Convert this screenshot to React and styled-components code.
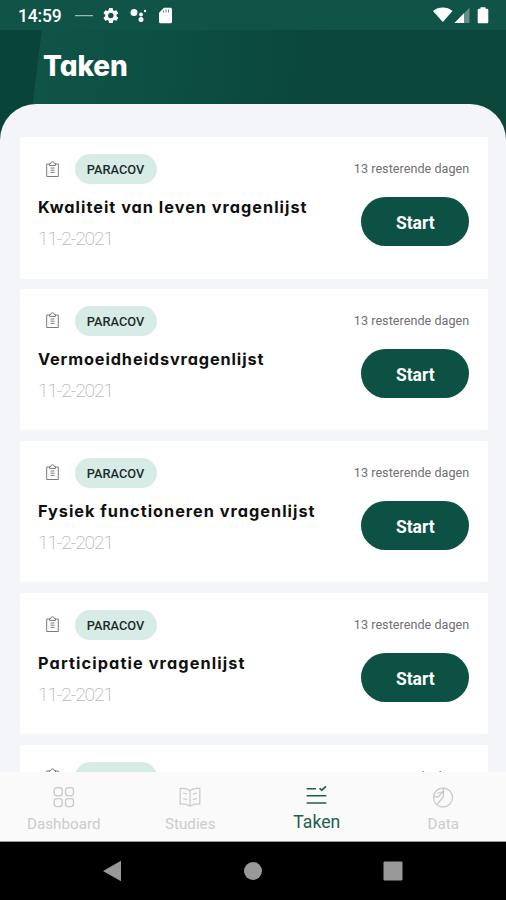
import React from "react";
import styled, { createGlobalStyle } from "styled-components";

const GlobalStyle = createGlobalStyle`
  * {
    box-sizing: border-box;
  }
  body {
    margin: 0;
    font-family: Roboto, "Liberation Sans", sans-serif;
    background-color: #000;
  }
`;

const Screen = styled.div`
  display: flex;
  flex-direction: column;
  width: 506px;
  height: 900px;
  overflow: hidden;
`;

const StatusBar = styled.div`
  display: flex;
  flex-shrink: 0;
  align-items: center;
  justify-content: space-between;
  height: 30px;
  padding: 2px 16px 0 18px;
  background-color: #105347;
`;

const StatusGroup = styled.div`
  display: flex;
  align-items: center;
`;

const Time = styled.span`
  width: 56px;
  color: #fff;
  font-size: 17.5px;
  font-weight: 500;
  letter-spacing: -0.2px;
`;

const Header = styled.header`
  flex-shrink: 0;
  height: 74px;
  padding: 19px 0 0 43px;
  background: linear-gradient(97deg, #084437 41px, #105347 42px, #0b5042 170px, #0b463b 330px);
`;

const PageTitle = styled.h1`
  margin: 0;
  color: #fff;
  font-family: Inter, "Open Sans", sans-serif;
  font-feature-settings: "cv11";
  font-size: 28px;
  font-weight: 800;
  line-height: 35px;
  letter-spacing: -0.1px;
`;

const SheetBack = styled.div`
  flex: 1;
  min-height: 0;
  background: linear-gradient(90deg, #084437 50%, #0b463b 50%);
`;

const Sheet = styled.main`
  display: flex;
  flex-direction: column;
  gap: 10.4px;
  height: 100%;
  padding: 33px 18.5px 0 20px;
  overflow: hidden;
  background-color: #f3f5f9;
  border-radius: 36px 36px 0 0;
`;

const Card = styled.article`
  display: flex;
  flex-shrink: 0;
  justify-content: space-between;
  height: 141.5px;
  padding: 17px 18.2px 0 18px;
  background-color: #fff;
  border-radius: 2px;
`;

const CardInfo = styled.div`
  display: flex;
  flex-direction: column;
`;

const TagRow = styled.div`
  display: flex;
  align-items: center;
  gap: 15.5px;
  padding-left: 8px;
`;

const Tag = styled.span`
  width: 82px;
  height: 30px;
  border-radius: 15px;
  background-color: #d7ece6;
  color: #1c2b29;
  font-size: 12.8px;
  font-weight: 500;
  line-height: 31.5px;
  text-align: center;
`;

const TaskTitle = styled.h2`
  margin: 12px 0 0;
  color: #101010;
  font-family: Inter, "Open Sans", sans-serif;
  font-feature-settings: "cv11";
  font-size: 16.3px;
  font-weight: 700;
  line-height: 23px;
  letter-spacing: ${(props) => props.$spacing}px;
  white-space: nowrap;
`;

const TaskDate = styled.time`
  margin-top: 8px;
  color: #b5b5b5;
  font-size: 19.2px;
  font-weight: 200;
  line-height: 24px;
  letter-spacing: -1.15px;
`;

const CardAction = styled.div`
  display: flex;
  flex-direction: column;
  align-items: flex-end;
  padding-top: 5px;
`;

const Remaining = styled.span`
  color: #707070;
  font-size: 12.6px;
  line-height: 20px;
  letter-spacing: 0.04px;
  white-space: nowrap;
`;

const StartButton = styled.button`
  width: 108px;
  height: 49px;
  margin-top: 18px;
  padding: 3px 0 0;
  border: 0;
  border-radius: 25px;
  background-color: #0d5144;
  color: #fff;
  font-family: inherit;
  font-size: 17.5px;
  font-weight: 700;
`;

const TabBar = styled.nav`
  display: grid;
  flex-shrink: 0;
  grid-template-columns: repeat(4, 1fr);
  height: 70px;
  border-bottom: 1px solid #9a9a9a;
  background-color: #fafafa;
`;

const Tab = styled.a`
  display: flex;
  flex-direction: column;
  align-items: center;
  padding: ${(props) => (props.$active ? "12px" : "14px")} 0 0 1px;
  color: ${(props) => (props.$active ? "#1d5f4e" : "#cbcbcb")};
  font-size: ${(props) => (props.$active ? "17.6px" : "15.2px")};
`;

const TabLabel = styled.span`
  margin-top: 6px;
  line-height: 20px;
`;

const SystemNav = styled.div`
  display: flex;
  flex-shrink: 0;
  align-items: center;
  justify-content: space-between;
  height: 58px;
  padding: 0 103px;
  background-color: #000;
`;

const tasks = [
  { id: 1, title: "Kwaliteit van leven vragenlijst", spacing: 1 },
  { id: 2, title: "Vermoeidheidsvragenlijst", spacing: 0.88 },
  { id: 3, title: "Fysiek functioneren vragenlijst", spacing: 1 },
  { id: 4, title: "Participatie vragenlijst", spacing: 1.1 },
  { id: 5 },
];

const NotificationIcons = () => (
  <svg width="100" height="18" viewBox="0 0 100 18" fill="#fff">
    <path d="M1 8.200h18v1H1z" opacity=".75" />
    <g transform="translate(27.500 -.9) scale(.78)">
      <path d="M19.14 12.94c.04-.3.06-.61.06-.94 0-.32-.02-.64-.07-.94l2.03-1.58a.49.49 0 0 0 .12-.61l-1.92-3.32a.488.488 0 0 0-.59-.22l-2.39.96c-.5-.38-1.03-.7-1.62-.94l-.36-2.54a.484.484 0 0 0-.48-.41h-3.84c-.24 0-.43.17-.47.41l-.36 2.54c-.59.24-1.13.57-1.62.94l-2.39-.96c-.22-.08-.47 0-.59.22L2.74 8.87c-.12.21-.08.47.12.61l2.03 1.58c-.05.3-.09.63-.09.94s.02.64.07.94l-2.03 1.58a.49.49 0 0 0-.12.61l1.92 3.32c.12.22.37.29.59.22l2.39-.96c.5.38 1.03.7 1.62.94l.36 2.54c.05.24.24.41.48.41h3.84c.24 0 .44-.17.47-.41l.36-2.54c.59-.24 1.13-.56 1.62-.94l2.39.96c.22.08.47 0 .59-.22l1.92-3.32c.12-.22.07-.47-.12-.61l-2.01-1.58zM12 15.6A3.61 3.61 0 0 1 8.4 12c0-1.98 1.62-3.6 3.6-3.6s3.6 1.62 3.6 3.6-1.62 3.6-3.6 3.6z" />
    </g>
    <circle cx="60" cy="5.500" r="3.500" />
    <circle cx="67" cy="7.500" r="1.900" />
    <circle cx="67" cy="12.600" r="2.500" />
    <circle cx="71" cy="4" r="1.200" />
    <path d="M90 .8h6.500c.9 0 1.500.6 1.500 1.500v12.400c0 .9-.6 1.500-1.500 1.500H86.500c-.9 0-1.500-.6-1.500-1.500V5.800z" />
    <path d="M89.500 3.500v2M92 2.500v3M94.500 2.500v3" stroke="#105347" strokeWidth=".7" />
  </svg>
);

const SignalIcons = () => (
  <svg width="57" height="18" viewBox="0 0 57 18" fill="#fff">
    <path d="M0 4C5.500-.6 14 -.6 19.500 4L9.800 15z" />
    <path d="M36.500 .8v15.200H21.500z" opacity=".35" />
    <path d="M31 6.200v9.800h-9.500z" />
    <path d="M47.500 1.700V.2h5v1.500h1.500c.7 0 1.300.6 1.300 1.300v12c0 .7-.6 1.300-1.300 1.300h-8c-.7 0-1.300-.6-1.300-1.300V3c0-.7.6-1.300 1.300-1.300z" />
  </svg>
);

const ClipboardIcon = () => (
  <svg width="13" height="17" viewBox="0 0 13 17" fill="none" stroke="#7c7c7c">
    <path d="M3.500 3H.7v12.500h11.600V3H9.500" />
    <path d="M3.500 4.500V2.500h1.300a1.700 1.700 0 0 1 3.400 0h1.300v2z" />
    <path d="M4.500 7h4M4.500 9.200h4M4.500 11.400h4" />
  </svg>
);

const DashboardIcon = () => (
  <svg width="22" height="22" viewBox="0 0 22 22" fill="none" stroke="currentColor" strokeWidth="1.400">
    <rect x="1.200" y="1.700" width="8" height="8" rx="2.500" />
    <rect x="12.500" y="1.700" width="8" height="8" rx="2.500" />
    <rect x="1.200" y="12.600" width="8" height="8" rx="2.500" />
    <rect x="12.500" y="12.600" width="8" height="8" rx="2.500" />
  </svg>
);

const StudiesIcon = () => (
  <svg width="22" height="22" viewBox="0 0 22 22" fill="none" stroke="currentColor" strokeWidth="1.300">
    <path d="M11 4.500C8 2.500 4.500 2 1.200 2.500V18c3.300-.2 6.800.3 9.800 2.300 3-2 6.500-2.500 9.800-2.300V2.500C17.500 2 14 2.500 11 4.500zM11 4.500V20" />
    <path d="M4 7l4 1.200M4 12.500l4 1.200M18 7l-4 1.200M18 12.500l-4 1.200" />
  </svg>
);

const TasksIcon = () => (
  <svg width="22" height="22" viewBox="0 0 22 22" fill="none" stroke="currentColor" strokeWidth="1.500">
    <path d="M.7 4.800h9.300M.7 11.800h19.600M.7 18.900h19.600" />
    <path d="M13.500 4.300l2.300 1.800 4.200-3.800" strokeWidth="1.700" />
  </svg>
);

const DataIcon = () => (
  <svg width="22" height="22" viewBox="0 0 22 22" fill="none" stroke="currentColor" strokeWidth="1.300">
    <circle cx="11" cy="11.500" r="9.500" />
    <path d="M11.500 2v8.500L5 18.500M2 10.500l4 .5 5-5M5 7.500l6-2" />
  </svg>
);

const App = () => {
  return (
    <Screen>
      <GlobalStyle />
      <StatusBar>
        <StatusGroup>
          <Time>14:59</Time>
          <NotificationIcons />
        </StatusGroup>
        <SignalIcons />
      </StatusBar>
      <Header>
        <PageTitle>Taken</PageTitle>
      </Header>
      <SheetBack>
        <Sheet>
          {tasks.map((task) => (
            <Card key={task.id}>
              <CardInfo>
                <TagRow>
                  <ClipboardIcon />
                  <Tag>{task.title && "PARACOV"}</Tag>
                </TagRow>
                {task.title && (
                  <>
                    <TaskTitle $spacing={task.spacing}>{task.title}</TaskTitle>
                    <TaskDate>11-2-2021</TaskDate>
                  </>
                )}
              </CardInfo>
              <CardAction>
                <Remaining>13 resterende dagen</Remaining>
                {task.title && <StartButton>Start</StartButton>}
              </CardAction>
            </Card>
          ))}
        </Sheet>
      </SheetBack>
      <TabBar>
        <Tab>
          <DashboardIcon />
          <TabLabel>Dashboard</TabLabel>
        </Tab>
        <Tab>
          <StudiesIcon />
          <TabLabel>Studies</TabLabel>
        </Tab>
        <Tab $active>
          <TasksIcon />
          <TabLabel>Taken</TabLabel>
        </Tab>
        <Tab>
          <DataIcon />
          <TabLabel>Data</TabLabel>
        </Tab>
      </TabBar>
      <SystemNav>
        <svg width="19" height="22" viewBox="0 0 19 22" fill="#999">
          <path d="M0 11L18 .7v20.600z" />
        </svg>
        <svg width="20" height="20" viewBox="0 0 20 20" fill="#999">
          <circle cx="10" cy="10" r="9" />
        </svg>
        <svg width="20" height="20" viewBox="0 0 20 20" fill="#999">
          <rect x=".5" y=".5" width="19" height="19" rx="1" />
        </svg>
      </SystemNav>
    </Screen>
  );
};

export default App;
